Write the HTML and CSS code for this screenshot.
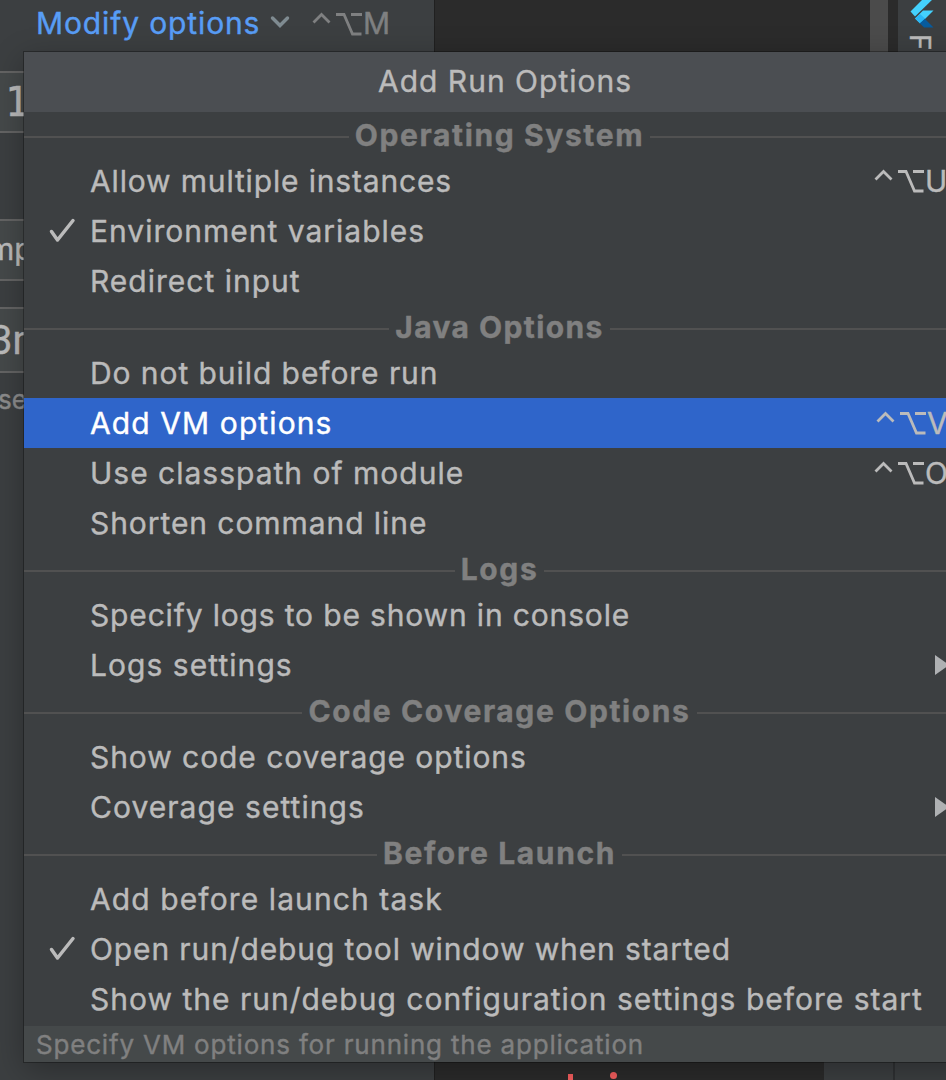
FILE: index.html
```html
<!DOCTYPE html>
<html lang="en">
<head>
<meta charset="utf-8">
<title>Add Run Options</title>
<link rel="stylesheet" href="styles.css">
</head>
<body>
<svg width="0" height="0" class="defs">
  <symbol id="keys" viewBox="0 0 52 26"><path d="M2.500 11.500l8-8 8 8M25 3.500h8l8.500 19.500h9M40 3.500h11" fill="none" stroke="currentColor" stroke-width="2.800"/></symbol>
  <symbol id="check" viewBox="0 0 28 26"><path d="M3.500 13.500l6 8.500L25 2.500" fill="none" stroke="currentColor" stroke-width="3.500" stroke-linecap="round" stroke-linejoin="round"/></symbol>
  <symbol id="arrow" viewBox="0 0 14 20"><path d="M0 0l14 10-14 10z" fill="currentColor"/></symbol>
</svg>
<div class="screen">
  <div class="window">
    <div class="dialog">
      <div class="modify">
        <span class="link">Modify options</span>
        <svg class="chevron" width="20" height="14" viewBox="0 0 20 14"><path d="M2.500 3l7.500 7.500L17.500 3" fill="none" stroke="currentColor" stroke-width="3.500" stroke-linecap="round"/></svg>
        <svg class="keys" width="52" height="26"><use href="#keys"/></svg><span class="key">M</span>
      </div>
      <div class="field field-jdk"><span>1</span></div>
      <div class="field field-module"><span>mp</span></div>
      <div class="field field-args"><span>3m</span></div>
      <div class="hint">se</div>
    </div>
    <div class="right">
      <div class="top">
        <div class="editor"></div>
        <div class="scroll"></div>
        <div class="gutter"></div>
        <div class="tools">
          <svg width="48" height="30" viewBox="0 0 48 30"><path d="M12.500 11.500L27 -3h10L17 16.500z" fill="#44d1fd"/><path d="M17 18.500l8-8h10.500l-8 8-5.500 5z" fill="#44d1fd"/><path d="M21.500 23l5-4.500 9 9H26z" fill="#075b9d"/><path d="M17 18.500l5-4.500 5 4.500-5 4.500z" fill="#29b6f6"/></svg>
          <span class="tab">F</span>
        </div>
      </div>
      <div class="bottom">
        <div class="console"><i class="stem"></i><i class="dot"></i></div>
        <div class="strip"></div>
      </div>
    </div>
  </div>

  <div class="popup">
    <div class="title"><span>Add Run Options</span></div>
    <div class="list">
      <div class="sep"><b>Operating System</b></div>
      <div class="row"><span class="t1">Allow multiple instances</span><span class="cut"><svg width="52" height="26"><use href="#keys"/></svg>U</span></div>
      <div class="row"><svg class="check" width="28" height="26"><use href="#check"/></svg><span>Environment variables</span></div>
      <div class="row"><span>Redirect input</span></div>
      <div class="sep"><b class="s2">Java Options</b></div>
      <div class="row"><span class="t4">Do not build before run</span></div>
      <div class="row selected"><span class="t5">Add VM options</span><span class="cut"><svg width="52" height="26"><use href="#keys"/></svg>V</span></div>
      <div class="row"><span>Use classpath of module</span><span class="cut"><svg width="52" height="26"><use href="#keys"/></svg>O</span></div>
      <div class="row"><span class="t4">Shorten command line</span></div>
      <div class="sep"><b>Logs</b></div>
      <div class="row"><span class="t1">Specify logs to be shown in console</span></div>
      <div class="row"><span class="t9">Logs settings</span><svg class="arrow" width="14" height="20"><use href="#arrow"/></svg></div>
      <div class="sep"><b>Code Coverage Options</b></div>
      <div class="row"><span class="t4">Show code coverage options</span></div>
      <div class="row"><span class="t9">Coverage settings</span><svg class="arrow" width="14" height="20"><use href="#arrow"/></svg></div>
      <div class="sep"><b>Before Launch</b></div>
      <div class="row"><span class="t5">Add before launch task</span></div>
      <div class="row"><svg class="check" width="28" height="26"><use href="#check"/></svg><span class="t13">Open run/debug tool window when started</span></div>
      <div class="row"><span>Show the run/debug configuration settings before start</span></div>
    </div>
    <div class="footer"><span>Specify VM options for running the application</span></div>
  </div>
</div>
</body>
</html>
```
FILE: styles.css
```css
* { box-sizing: border-box; }
body { margin: 0; background: #3c3f41; font-family: Inter, "Liberation Sans", sans-serif; -webkit-text-stroke: .4px currentColor; }
.defs { position: absolute; }
.screen { position: relative; width: 946px; height: 1080px; overflow: hidden; color: #bbbbbb; }
.window { display: flex; height: 1080px; }
.dialog { width: 434px; background: #3c3f41; }
.modify { display: flex; align-items: center; height: 46px; padding-left: 36px; margin-bottom: 25px; font-size: 30px; color: #7f8081; }
.link { color: #589df6; width: 224px; letter-spacing: .87px; white-space: nowrap; }
.chevron { margin: -2px 0 0 10px; color: #7f8b91; }
.modify .keys { margin: 2px 0 0 21px; }
.key { margin-left: 0; }
.field { width: 24px; height: 62px; border-top: 2px solid #646464; border-bottom: 2px solid #646464; background: #45494a; white-space: nowrap; }
.field-jdk { padding: 5px 0 0 5px; font: 40px/48px "DejaVu Sans Mono", monospace; }
.field-module { margin-top: 86px; font-size: 30px; line-height: 57px; }
.field-module span { margin-left: -12px; }
.field-args { height: 66px; margin-top: 26px; font-size: 40px; line-height: 64px; font-family: Roboto, sans-serif; }
.field-args span { margin-left: -10px; }
.hint { margin-top: 11px; margin-left: -2px; font-size: 26px; line-height: 32px; color: #8c8c8c; }
.right { width: 512px; display: flex; flex-direction: column; justify-content: space-between; }
.top { display: flex; height: 560px; }
.editor { width: 436px; background: #2b2b2b; border-left: 1px solid #202020; }
.scroll { width: 18px; background: #4b4b4b; }
.gutter { width: 10px; background: #2b2b2b; }
.tools { width: 48px; background: #3c3f41; }
.tools svg { display: block; }
.tab { display: block; width: 24px; height: 24px; margin: 4px 0 0 10px; font-size: 28px; line-height: 24px; writing-mode: vertical-rl; }
.bottom { display: flex; height: 520px; }
.console { display: flex; align-items: flex-end; gap: 37px; width: 390px; padding-left: 133px; background: #2b2b2b; border-left: 1px solid #202020; }
.strip { width: 71px; background: #3c3f41; border-right: 2px solid #2f3133; }
.stem { width: 5px; height: 6px; background: #f75f5f; }
.dot { width: 7px; height: 7px; margin-bottom: 1px; border-radius: 50%; background: #f75f5f; }

.popup { position: absolute; left: 24px; top: 52px; width: 951px; height: 1010px; background: #3c3f41; box-shadow: 0 0 0 1px rgba(0,0,0,.3), 0 8px 30px rgba(0,0,0,.3); white-space: nowrap; }
.title { height: 60px; padding-left: 354px; background: #4b4e52; font-size: 30px; line-height: 58px; letter-spacing: 1px; }
.list { padding: 2px 0; }
.sep { display: flex; gap: 6px; height: 42px; font-size: 30px; line-height: 42px; color: #808080; letter-spacing: 1.62px; }
.s2 { letter-spacing: 1.4px; }
.sep::before, .sep::after { content: ""; flex: 1; height: 2px; margin-top: 22px; background: #515151; }
.row { position: relative; height: 50px; padding-left: 66px; font-size: 30px; line-height: 50px; letter-spacing: 1px; }
.t1 { letter-spacing: .84px; }
.t4 { letter-spacing: .93px; }
.t5 { letter-spacing: 1.1px; }
.t9 { letter-spacing: 1.05px; }
.t13 { letter-spacing: .88px; }
.selected { background: #2f65ca; color: #fff; }
.check { position: absolute; left: 24px; top: 12px; color: #bbb; }
.arrow { position: absolute; left: 911px; top: 15px; color: #afb1b3; }
.cut { position: absolute; left: 849px; top: 0; display: flex; align-items: center; color: #bbb; }
.selected .cut { left: 851px; }
.footer { height: 36px; padding-left: 12px; background: #45494a; color: #808080; font-size: 26px; line-height: 38px; letter-spacing: .81px; }
```
